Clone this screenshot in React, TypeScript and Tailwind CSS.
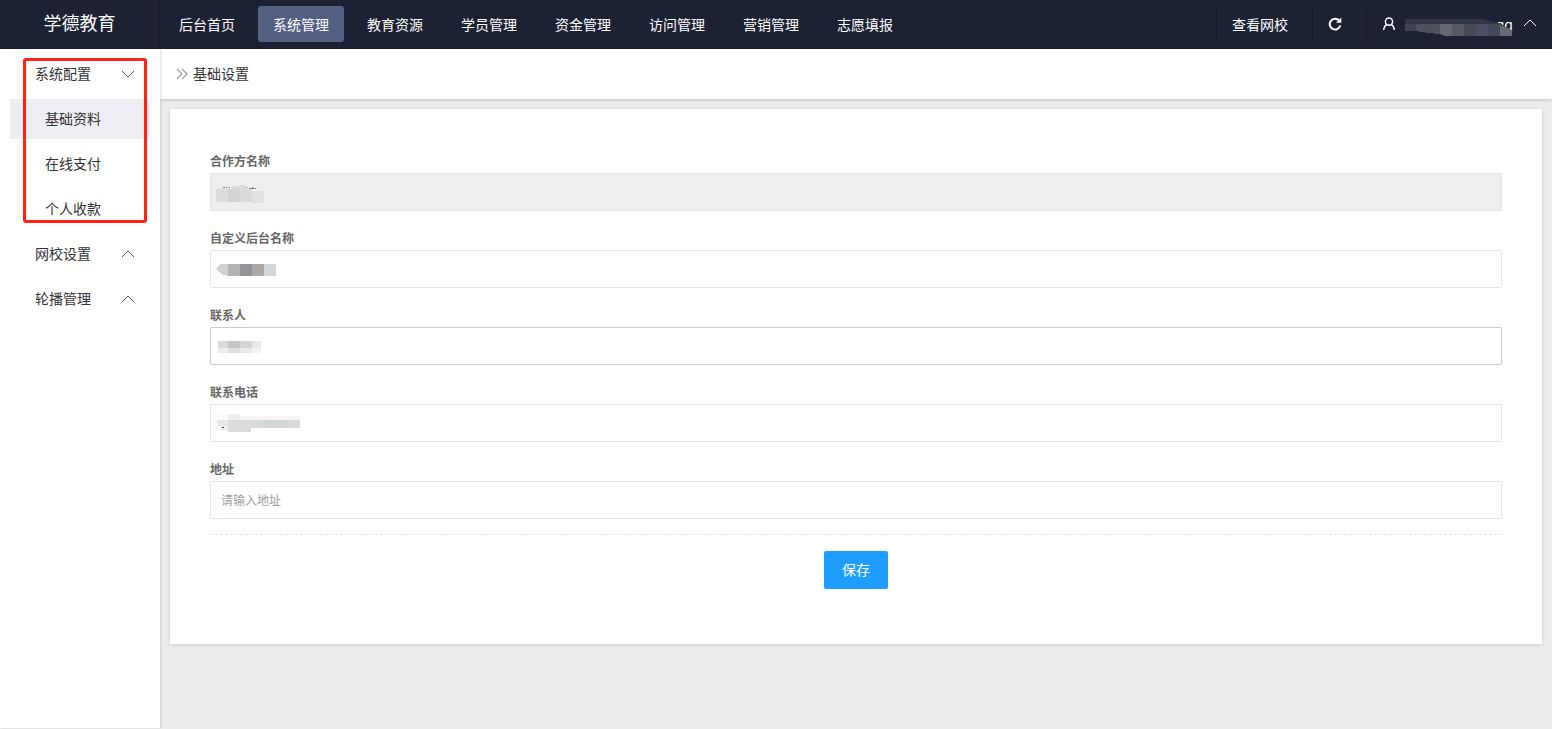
import { useState } from "react";
import type { ReactNode } from "react";

const NAV = ["后台首页", "系统管理", "教育资源", "学员管理", "资金管理", "访问管理", "营销管理", "志愿填报"];

type Block = { x: number; y: number; w: number; h: number; c: string };

const MASKS: Record<string, Block[]> = {
  partner: [
    { x: 8, y: 15, w: 9, h: 3, c: "#e4e4e4" },
    { x: 22, y: 13, w: 14, h: 5, c: "#dcdcdc" },
    { x: 30, y: 12, w: 5, h: 2, c: "#dcdcdc" },
    { x: 39, y: 15, w: 7, h: 1, c: "#8d8d8d" },
    { x: 42, y: 14, w: 1, h: 2, c: "#6d6d6d" },
    { x: 36, y: 14, w: 1, h: 1, c: "#5f6f8f" },
    { x: 13, y: 14, w: 2, h: 1, c: "#777777" },
    { x: 16, y: 14, w: 1, h: 1, c: "#8a7a6a" },
    { x: 18, y: 14, w: 2, h: 1, c: "#9a9a9a" },
    { x: 6, y: 16, w: 12, h: 13, c: "#dddcdb" },
    { x: 18, y: 16, w: 12, h: 13, c: "#d3d3d3" },
    { x: 30, y: 16, w: 12, h: 13, c: "#dadadb" },
    { x: 42, y: 18, w: 12, h: 12, c: "#e2e2e2" },
  ],
  backend: [
    { x: 18, y: 14, w: 12, h: 12, c: "#b3b3b2" },
    { x: 30, y: 14, w: 12, h: 12, c: "#949598" },
    { x: 42, y: 14, w: 12, h: 12, c: "#aaa9a8" },
    { x: 54, y: 14, w: 12, h: 12, c: "#d3d7d9" },
  ],
  contact: [
    { x: 8, y: 14, w: 10, h: 7, c: "#dcdbd8" },
    { x: 18, y: 14, w: 12, h: 7, c: "#c6c6c8" },
    { x: 30, y: 14, w: 12, h: 7, c: "#d5d5d8" },
    { x: 42, y: 14, w: 9, h: 7, c: "#eae9f0" },
    { x: 8, y: 21, w: 10, h: 5, c: "#eeeeea" },
    { x: 18, y: 21, w: 12, h: 5, c: "#e0e0e2" },
    { x: 30, y: 21, w: 12, h: 5, c: "#e9e9ea" },
    { x: 42, y: 21, w: 9, h: 5, c: "#f3f2f6" },
  ],
  phone: [
    { x: 7, y: 10, w: 11, h: 6, c: "#fbfbfb" },
    { x: 18, y: 10, w: 12, h: 6, c: "#eeeeef" },
    { x: 30, y: 12, w: 60, h: 4, c: "#f6f6f7" },
    { x: 7, y: 16, w: 11, h: 6, c: "#e8e8e5" },
    { x: 10, y: 22, w: 8, h: 5, c: "#eeeeec" },
    { x: 18, y: 16, w: 12, h: 12, c: "#dedbdc" },
    { x: 30, y: 16, w: 11, h: 12, c: "#dadbdc" },
    { x: 41, y: 16, w: 13, h: 8, c: "#d6dbd9" },
    { x: 54, y: 16, w: 12, h: 8, c: "#d2d5d2" },
    { x: 66, y: 16, w: 12, h: 8, c: "#d1d7d7" },
    { x: 78, y: 16, w: 12, h: 8, c: "#d8dadc" },
    { x: 12, y: 23, w: 2, h: 1, c: "#333333" },
  ],
};

const FIELDS = [
  { id: "partner", label: "合作方名称", disabled: true, box: "border-[#e6e6e6] bg-[#eeeeee]" },
  { id: "backend", label: "自定义后台名称", box: "border-[#e6e6e6] bg-white" },
  { id: "contact", label: "联系人", box: "border-[#cccccc] bg-white" },
  { id: "phone", label: "联系电话", box: "border-[#e6e6e6] bg-white" },
  { id: "address", label: "地址", placeholder: "请输入地址", box: "border-[#e6e6e6] bg-white" },
];

function Mask({ id }: { id: string }) {
  const blocks = MASKS[id];
  if (!blocks) return null;
  return (
    <svg className="pointer-events-none absolute left-0 top-0" width="100" height="38" shapeRendering="crispEdges" aria-hidden="true">
      {id === "backend" && <path d="M18 14h-7l-5 4 5 6 7 2z" fill="#d0d0cf" />}
      {blocks.map((b, i) => (
        <rect key={i} x={b.x} y={b.y} width={b.w} height={b.h} fill={b.c} />
      ))}
    </svg>
  );
}

function Chevron({ up, className }: { up?: boolean; className?: string }) {
  return (
    <svg className={className} width="14" height="14" viewBox="0 0 14 14" fill="none" stroke="currentColor" strokeWidth="1" aria-hidden="true">
      <path d={up ? "M1 10l6-6 6 6" : "M1 4l6 6 6-6"} />
    </svg>
  );
}

function Group({ title, open, onToggle, children }: { title: string; open: boolean; onToggle: () => void; children?: ReactNode }) {
  return (
    <div>
      <button
        type="button"
        aria-expanded={open}
        onClick={onToggle}
        className="mt-[5px] flex h-10 w-full items-center justify-between pl-[25px] pr-[25px] text-left"
      >
        <span className="pb-0.5">{title}</span>
        <Chevron up={!open} className="text-[#555]" />
      </button>
      {open && children}
    </div>
  );
}

export default function App() {
  const [active, setActive] = useState("系统管理");
  const [page, setPage] = useState("基础资料");
  const [open, setOpen] = useState<Record<string, boolean>>({ 系统配置: true });
  const toggle = (k: string) => setOpen((o) => ({ ...o, [k]: !o[k] }));

  return (
    <div className="flex min-h-screen flex-col bg-[#ededed] pb-px font-['Noto_Sans_CJK_SC',sans-serif] text-sm text-[#333]">
      <header className="flex h-[49px] shrink-0 items-center bg-[#1d2134] pb-px text-white">
        <div className="flex h-full w-40 shrink-0 items-center justify-center border-r border-[#191c2c] pb-1 text-lg">学德教育</div>
        <nav className="ml-1 flex gap-2">
          {NAV.map((n) => (
            <a
              key={n}
              href="#"
              onClick={() => setActive(n)}
              className={`flex h-9 items-center rounded-[3px] px-[15px] ${n === active ? "bg-[#536081]" : ""}`}
            >
              {n}
            </a>
          ))}
        </nav>
        <div className="ml-auto flex h-[34px] items-center">
          <a href="#" className="flex h-full items-center border-l border-[#171a29] pl-[15px] pr-6">
            查看网校
          </a>
          <button type="button" aria-label="刷新" className="flex h-full w-[54px] items-center border-l border-[#171a29] pl-[14px]">
            <svg width="16" height="16" viewBox="0 0 16 16" fill="none" aria-hidden="true">
              <path d="M12.2 4.6A5.4 5.4 0 1 0 13.3 9.6" stroke="#fff" strokeWidth="2" />
              <path d="M14.3 1.6v5.2H9z" fill="#fff" />
            </svg>
          </button>
          <button type="button" aria-label="账户" className="flex h-full w-[186px] items-center border-l border-[#171a29] pl-[15px]">
            <svg width="14" height="16" viewBox="0 0 14 16" fill="none" stroke="#fff" strokeWidth="1.4" aria-hidden="true">
              <circle cx="7" cy="5.6" r="3.6" />
              <path d="M4.8 8.4C2.8 9.6 1.9 11.4 1.6 14M9.2 8.4c2 1.2 2.9 3 3.2 5.6" />
            </svg>
            <span className="relative ml-[9px] flex h-9 w-[108px] items-center justify-end">
              <span className="leading-5">qq</span>
              <svg className="absolute left-0 top-0" width="108" height="36" shapeRendering="crispEdges" aria-hidden="true">
                <path d="M0 13h76l18 4 13 7v13H90V24H0z" fill="#313545" />
                <path d="M0 18h11v7H0z" fill="#3d4150" />
                <path d="M11 18h12v9l-12-2z" fill="#4d505d" />
                <path d="M23 18h12v10l-12-1z" fill="#4f535e" />
                <path d="M35 18h12v12H40l-5-2z" fill="#656872" />
                <path d="M47 18h12v12H47z" fill="#525a64" />
                <path d="M59 18h12v12H59z" fill="#494857" />
                <path d="M71 18h12v12H71z" fill="#4b5066" />
                <path d="M83 18h12v12H83z" fill="#444757" />
                <path d="M95 19l12 5v6H95z" fill="#666976" />
                <path d="M83 30h25v6H83z" fill="#1d2134" />
              </svg>
            </span>
            <Chevron up className="mb-0.5 ml-[10px]" />
          </button>
        </div>
      </header>

      <div className="flex flex-1">
        <aside className="relative z-10 w-40 shrink-0 bg-white pl-[10px] shadow-[1px_0_2px_rgba(0,0,0,0.12)]">
          <Group title="系统配置" open={!!open["系统配置"]} onToggle={() => toggle("系统配置")}>
            {["基础资料", "在线支付", "个人收款"].map((s) => (
              <a
                key={s}
                href="#"
                onClick={() => setPage(s)}
                className={`mr-[10px] mt-[5px] flex h-10 items-center pb-0.5 pl-[35px] ${s === page ? "bg-[#eeeff4]" : ""}`}
              >
                {s}
              </a>
            ))}
          </Group>
          <Group title="网校设置" open={!!open["网校设置"]} onToggle={() => toggle("网校设置")} />
          <Group title="轮播管理" open={!!open["轮播管理"]} onToggle={() => toggle("轮播管理")} />
          <div className="pointer-events-none absolute left-[23px] top-[9px] h-[165px] w-[124px] rounded-[3px] border-[3px] border-[#ff2317]" />
        </aside>

        <main className="min-w-0 flex-1">
          <div className="flex h-[50px] items-center bg-white pl-4 shadow-[0_1px_4px_rgba(0,0,0,0.2)]">
            <svg width="12" height="12" viewBox="0 0 12 12" fill="none" stroke="#999" strokeWidth="1.1" aria-hidden="true">
              <path d="M1 1l5 5-5 5M6 1l5 5-5 5" />
            </svg>
            <h1 className="ml-[5px] pb-0.5">基础设置</h1>
          </div>
          <form
            onSubmit={(e) => e.preventDefault()}
            className="m-[10px] bg-white px-10 pb-[55px] pt-10 shadow-[0_1px_4px_rgba(0,0,0,0.15)]"
          >
            {FIELDS.map((f) => (
              <div key={f.id} className="mb-[15px]">
                <label htmlFor={f.id} className="block h-6 text-xs font-bold leading-6 text-[#666]">
                  {f.label}
                </label>
                <div className="relative">
                  <input
                    id={f.id}
                    type="text"
                    disabled={f.disabled}
                    placeholder={f.placeholder}
                    className={`block h-[38px] w-full rounded-[2px] border px-[10px] pb-0.5 text-xs outline-none placeholder:text-[#a0a0a0] ${f.box}`}
                  />
                  <Mask id={f.id} />
                </div>
              </div>
            ))}
            <div className="flex justify-center border-t border-dashed border-[#e6e6e6] pt-4">
              <button type="submit" className="h-[38px] rounded-[2px] bg-[#1e9fff] px-[18px] pb-0.5 text-white">
                保存
              </button>
            </div>
          </form>
        </main>
      </div>
    </div>
  );
}
